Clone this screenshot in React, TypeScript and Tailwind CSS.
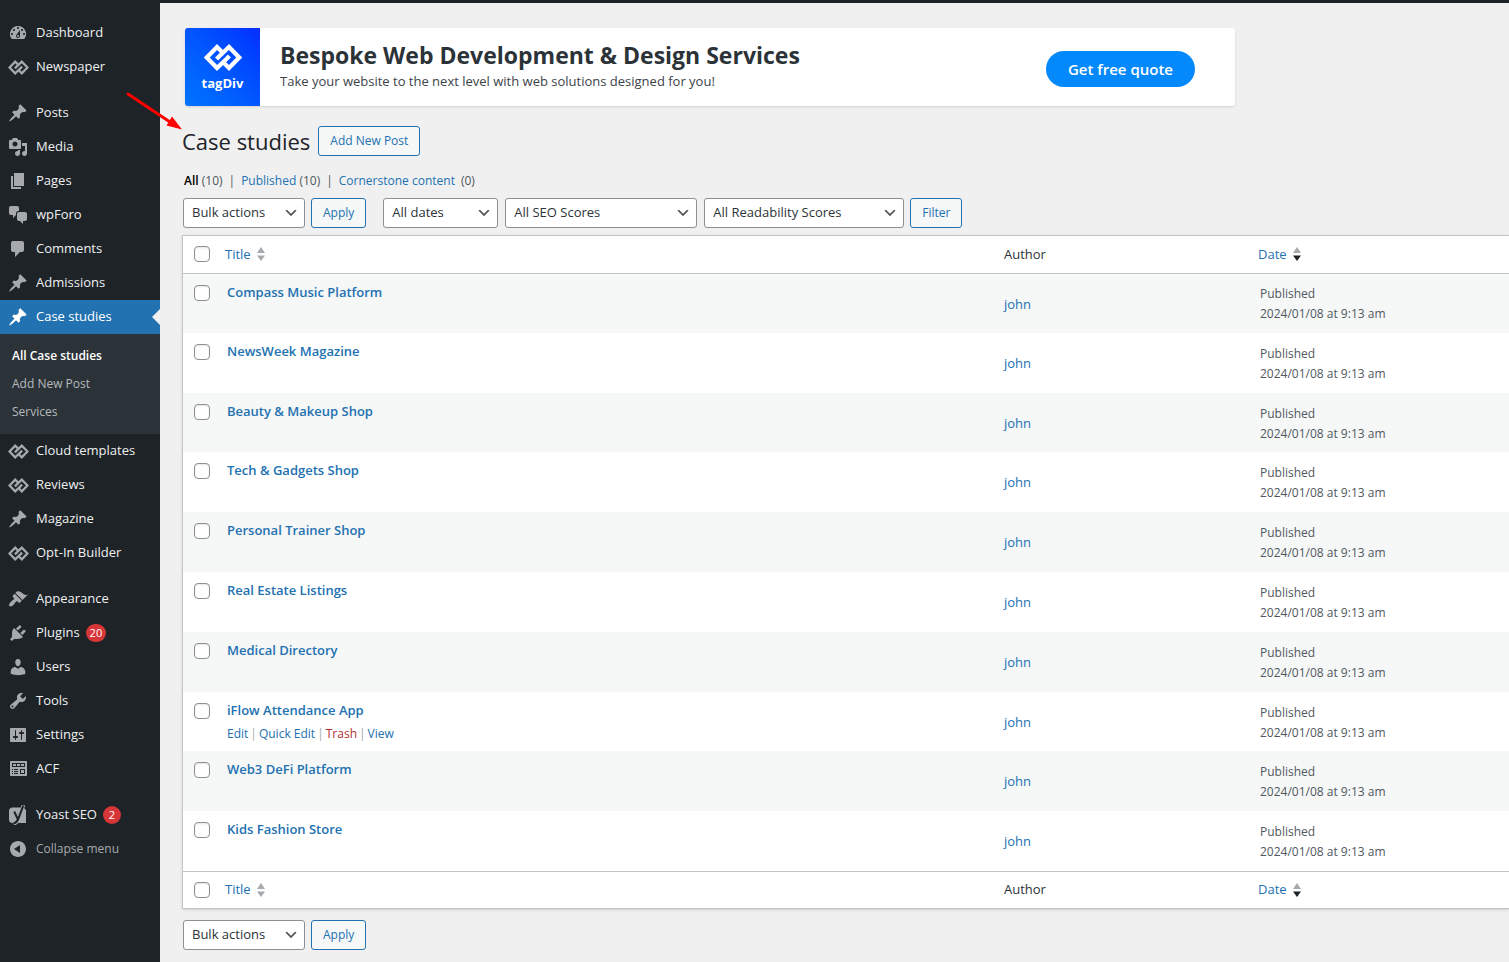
import React, { useState } from "react";

type IconName =
  | "dashboard"
  | "tagdiv"
  | "pin"
  | "media"
  | "pages"
  | "chat"
  | "comment"
  | "brush"
  | "plug"
  | "user"
  | "wrench"
  | "sliders"
  | "acf"
  | "yoast"
  | "collapse";

type MenuItem = {
  label: string;
  icon: IconName;
  count?: number;
  current?: boolean;
};

const ICON_PATHS: Partial<Record<IconName, string>> = {
  dashboard:
    "M3.76 16h12.48A7.998 7.998 0 0 0 10 3a7.998 7.998 0 0 0-6.24 13zM10 4c.55 0 1 .45 1 1s-.45 1-1 1-1-.45-1-1 .45-1 1-1zM6 6c.55 0 1 .45 1 1s-.45 1-1 1-1-.45-1-1 .45-1 1-1zm8 0c.55 0 1 .45 1 1s-.45 1-1 1-1-.45-1-1 .45-1 1-1zm-5.37 5.55L12 7v6c0 1.1-.9 2-2 2s-2-.9-2-2c0-.57.24-1.08.63-1.45zM4 10c.55 0 1 .45 1 1s-.45 1-1 1-1-.45-1-1 .45-1 1-1zm12 0c.55 0 1 .45 1 1s-.45 1-1 1-1-.45-1-1 .45-1 1-1zm-5 3c0-.55-.45-1-1-1s-1 .45-1 1 .45 1 1 1 1-.45 1-1z",
  pin: "M10.44 3.02l1.82-1.82 6.36 6.35-1.83 1.82c-1.05-.68-2.48-.57-3.41.36l-.75.75c-.92.93-1.04 2.35-.35 3.41l-1.83 1.82-2.41-2.41-2.8 2.79c-.42.42-3.38 2.71-3.8 2.29s1.86-3.39 2.28-3.81l2.79-2.79L4.1 9.36l1.83-1.82c1.05.69 2.48.57 3.4-.36l.75-.75c.93-.92 1.05-2.35.36-3.41z",
  media:
    "M13 11V4c0-.55-.45-1-1-1h-1.67L9 1H5L3.67 3H2c-.55 0-1 .45-1 1v7c0 .55.45 1 1 1h10c.55 0 1-.45 1-1zM7 4.5c1.38 0 2.5 1.12 2.5 2.5S8.38 9.5 7 9.5 4.5 8.38 4.5 7 5.62 4.5 7 4.5zM14 6h5v10.5c0 1.38-1.12 2.5-2.5 2.5S14 17.88 14 16.5s1.12-2.5 2.5-2.5c.17 0 .34.02.5.05V9h-3V6zm-4 8.05V13h2v3.5c0 1.38-1.12 2.5-2.5 2.5S7 17.88 7 16.5 8.12 14 9.5 14c.17 0 .34.02.5.05z",
  pages: "M6 15V2h10v13H6zm-1 1h8v2H3V5h2v11z",
  chat: "M11 6h-.82C9.07 6 8 7.2 8 8.16V10l-3 3v-3H3c-1.1 0-2-.9-2-2V3c0-1.1.9-2 2-2h6c1.1 0 2 .9 2 2v3zm0 1h6c1.1 0 2 .9 2 2v5c0 1.1-.9 2-2 2h-2v3l-3-3h-1c-1.1 0-2-.9-2-2V9c0-1.1.9-2 2-2z",
  comment:
    "M5 2h9c1.1 0 2 .9 2 2v7c0 1.1-.9 2-2 2h-2l-5 5v-5H5c-1.1 0-2-.9-2-2V4c0-1.1.9-2 2-2z",
  brush:
    "M14.48 11.06L7.41 3.99l1.5-1.5c.5-.56 2.3-.47 3.51.32 1.21.8 1.43 1.28 2.91 2.1 1.18.64 2.45 1.26 4.45.85zm-.71.71L6.7 4.7 4.93 6.47c-.39.39-.39 1.02 0 1.41l1.06 1.06c.39.39.39 1.03 0 1.42-.6.6-1.43 1.11-2.21 1.69-.35.26-.7.53-1.01.84C1.43 14.23.4 16.08 1.4 17.07c.99 1 2.84-.03 4.18-1.36.31-.31.58-.66.85-1.02.57-.78 1.08-1.61 1.69-2.21.39-.39 1.02-.39 1.41 0l1.06 1.06c.39.39 1.02.39 1.41 0z",
  plug: "M13.11 4.36L9.87 7.6 8 5.73l3.24-3.24c.35-.34 1.05-.2 1.56.32.52.51.66 1.21.31 1.55zm-8 1.77l.91-1.12 9.01 9.01-1.19.84c-.71.71-2.63 1.16-3.82 1.16H6.14L4.9 17.26c-.59.59-1.54.59-2.12 0-.59-.58-.59-1.53 0-2.12l1.24-1.24v-3.88c0-1.13.4-3.19 1.09-3.89zm7.26 3.97l3.24-3.24c.34-.35 1.04-.21 1.55.31.52.51.66 1.21.31 1.55l-3.24 3.25z",
  user: "M10 9.25c-2.27 0-2.73-3.44-2.73-3.44C7 4.02 7.82 2 9.97 2c2.16 0 2.98 2.02 2.71 3.81 0 0-.41 3.44-2.68 3.44zm0 2.57L12.72 10c2.39 0 4.52 2.33 4.52 4.53v2.49s-3.65 1.13-7.24 1.13c-3.65 0-7.24-1.13-7.24-1.13v-2.49c0-2.25 1.94-4.48 4.47-4.48z",
  wrench:
    "M16.68 9.77c-1.34 1.34-3.3 1.67-4.95.99l-5.41 6.52c-.99.99-2.59.99-3.58 0s-.99-2.59 0-3.57l6.52-5.42c-.68-1.65-.35-3.61.99-4.95 1.28-1.28 3.12-1.62 4.72-1.06l-2.89 2.89 2.82 2.82 2.86-2.87c.53 1.58.18 3.39-1.08 4.65zM3.81 16.21c.4.39 1.04.39 1.43 0 .4-.4.4-1.04 0-1.43-.39-.4-1.03-.4-1.43 0-.39.39-.39 1.03 0 1.43z",
  sliders:
    "M18 16V4c0-.55-.45-1-1-1H3c-.55 0-1 .45-1 1v12c0 .55.45 1 1 1h14c.55 0 1-.45 1-1zM8 11h1c.55 0 1 .45 1 1s-.45 1-1 1H8v1.5c0 .28-.22.5-.5.5s-.5-.22-.5-.5V13H6c-.55 0-1-.45-1-1s.45-1 1-1h1V5.5c0-.28.22-.5.5-.5s.5.22.5.5V11zm5-2h-1c-.55 0-1-.45-1-1s.45-1 1-1h1V5.5c0-.28.22-.5.5-.5s.5.22.5.5V7h1c.55 0 1 .45 1 1s-.45 1-1 1h-1v5.5c0 .28-.22.5-.5.5s-.5-.22-.5-.5V9z",
  acf: "M19 16V3c0-.55-.45-1-1-1H3c-.55 0-1 .45-1 1v13c0 .55.45 1 1 1h15c.55 0 1-.45 1-1zM4 4h13v4H4V4zm1 1v2h3V5H5zm4 0v2h3V5H9zm4 0v2h3V5h-3zM4 10h1v1H4v-1zm2 0h4v1H6v-1zm6 0h5v5h-5v-5zm-8 2h1v1H4v-1zm2 0h4v1H6v-1zm7-1v3h3v-3h-3zM4 14h1v1H4v-1zm2 0h4v1H6v-1z",
  collapse:
    "M10 2c4.42 0 8 3.58 8 8s-3.58 8-8 8-8-3.58-8-8 3.58-8 8-8zM12 14V6l-6 4z",
};

const MENU_TOP: MenuItem[] = [
  { label: "Dashboard", icon: "dashboard" },
  { label: "Newspaper", icon: "tagdiv" },
];

const MENU_CONTENT: MenuItem[] = [
  { label: "Posts", icon: "pin" },
  { label: "Media", icon: "media" },
  { label: "Pages", icon: "pages" },
  { label: "wpForo", icon: "chat" },
  { label: "Comments", icon: "comment" },
  { label: "Admissions", icon: "pin" },
  { label: "Case studies", icon: "pin", current: true },
];

const MENU_THEME: MenuItem[] = [
  { label: "Cloud templates", icon: "tagdiv" },
  { label: "Reviews", icon: "tagdiv" },
  { label: "Magazine", icon: "pin" },
  { label: "Opt-In Builder", icon: "tagdiv" },
];

const MENU_ADMIN: MenuItem[] = [
  { label: "Appearance", icon: "brush" },
  { label: "Plugins", icon: "plug", count: 20 },
  { label: "Users", icon: "user" },
  { label: "Tools", icon: "wrench" },
  { label: "Settings", icon: "sliders" },
  { label: "ACF", icon: "acf" },
];

const POSTS = [
  "Compass Music Platform",
  "NewsWeek Magazine",
  "Beauty & Makeup Shop",
  "Tech & Gadgets Shop",
  "Personal Trainer Shop",
  "Real Estate Listings",
  "Medical Directory",
  "iFlow Attendance App",
  "Web3 DeFi Platform",
  "Kids Fashion Store",
];

const TagDivMark = ({ className }: { className: string }) => (
  <svg
    viewBox="0 0 38 27"
    className={className}
    fill="none"
    stroke="currentColor"
    strokeWidth="4.2"
    aria-hidden="true"
  >
    <path d="M19.500 9.500L13 3 2.800 13.500 13 24l11-10.500-1.600-1.600" />
    <path d="M18.500 17.500L25 24l10.200-10.500L25 3 14 13.500l1.600 1.600" />
  </svg>
);

const MenuIcon = ({ name }: { name: IconName }) => {
  if (name === "tagdiv") return <TagDivMark className="h-[15px] w-[21px]" />;
  if (name === "yoast")
    return (
      <svg viewBox="0 0 20 20" className="h-5 w-5" aria-hidden="true">
        <path
          d="M4.500 2.500h11L18 5v13H4.500C2.500 18 1 16.700 1 14.700V6c0-2 1.500-3.500 3.500-3.500z"
          fill="currentColor"
        />
        <path
          d="M15.500 0L10.700 13.500c-1 2.900-2.300 4.600-5.200 5.500"
          fill="none"
          stroke="currentColor"
          strokeWidth="3.600"
        />
        <path
          d="M15.300.5L10.500 13.300c-1 2.900-2.300 4.400-4.900 5.200M6.200 6.500l3.500 7.500"
          fill="none"
          stroke="#1d2327"
          strokeWidth="2"
        />
      </svg>
    );
  return (
    <svg
      viewBox="0 0 20 20"
      className="h-5 w-5"
      fill="currentColor"
      fillRule="evenodd"
      aria-hidden="true"
    >
      <path d={ICON_PATHS[name]} />
    </svg>
  );
};

const MenuGroup = ({ items }: { items: MenuItem[] }) => (
  <ul>
    {items.map((item) => (
      <li key={item.label}>
        <a
          href="#"
          className={`relative flex h-[34px] items-center text-[13px] ${
            item.current ? "bg-[#2271b1] text-white" : "text-[#f0f0f1]"
          }`}
        >
          <span
            className={`flex w-9 justify-center ${
              item.current ? "text-white" : "text-[#a7aaad]"
            }`}
          >
            <MenuIcon name={item.icon} />
          </span>
          {item.label}
          {item.count && (
            <span className="ml-1.5 flex h-[18px] min-w-[18px] items-center justify-center rounded-full bg-[#d63638] px-1 text-[11px] text-white">
              {item.count}
            </span>
          )}
          {item.current && (
            <span className="absolute right-0 border-y-8 border-r-8 border-y-transparent border-r-[#f0f0f0]" />
          )}
        </a>
      </li>
    ))}
  </ul>
);

const Sidebar = () => (
  <nav
    aria-label="Main menu"
    className="flex w-40 shrink-0 flex-col bg-[#1d2327] pt-[13px]"
  >
    <MenuGroup items={MENU_TOP} />
    <div className="h-3" />
    <MenuGroup items={MENU_CONTENT} />
    <ul className="bg-[#2c3338] px-3 py-2 text-xs leading-7 text-[#b4b9be]">
      <li>
        <a href="#" className="font-semibold text-white">
          All Case studies
        </a>
      </li>
      <li>
        <a href="#">Add New Post</a>
      </li>
      <li>
        <a href="#">Services</a>
      </li>
    </ul>
    <MenuGroup items={MENU_THEME} />
    <div className="h-3" />
    <MenuGroup items={MENU_ADMIN} />
    <div className="h-3" />
    <MenuGroup items={[{ label: "Yoast SEO", icon: "yoast", count: 2 }]} />
    <button
      type="button"
      className="flex h-[34px] items-center text-xs text-[#a7aaad]"
    >
      <span className="flex w-9 justify-center">
        <MenuIcon name="collapse" />
      </span>
      Collapse menu
    </button>
  </nav>
);

const Banner = () => (
  <section className="mr-5 ml-[3px] flex h-[78px] max-w-[1050px] items-center overflow-hidden rounded-[3px] bg-white shadow">
    <div className="flex h-full w-[75px] shrink-0 flex-col items-center justify-center bg-linear-to-tr from-[#0074ff] to-[#0a2cff] text-white">
      <TagDivMark className="h-[27px] w-[38px]" />
      <span className="mt-1 text-[13px] leading-4 font-bold">tagDiv</span>
    </div>
    <div className="ml-5 flex-1 pb-1">
      <h2 className="text-[23px] leading-8 font-bold text-[#2c3338]">
        Bespoke Web Development &amp; Design Services
      </h2>
      <p className="text-[13px] leading-5 text-[#3c434a]">
        Take your website to the next level with web solutions designed for you!
      </p>
    </div>
    <a
      href="#"
      className="mt-1 mr-10 flex h-9 w-[149px] items-center justify-center rounded-full bg-[#0489fc] text-[15px] font-semibold text-white"
    >
      Get free quote
    </a>
  </section>
);

const FilterSelect = ({
  label,
  value,
  width,
}: {
  label: string;
  value: string;
  width: string;
}) => (
  <div className={`relative ${width}`}>
    <select
      aria-label={label}
      className="h-[30px] w-full appearance-none rounded-[3px] border border-[#8c8f94] bg-white pr-6 pl-2 text-[13px] text-[#2c3338]"
    >
      <option>{value}</option>
    </select>
    <svg
      viewBox="0 0 20 20"
      className="pointer-events-none absolute top-[7px] right-1.5 h-4 w-4"
      aria-hidden="true"
    >
      <path d="M5 6l5 5 5-5 2 1-7 7-7-7 2-1z" fill="#555" />
    </svg>
  </div>
);

const OutlineButton = ({ children }: { children: React.ReactNode }) => (
  <button
    type="button"
    className="h-[30px] rounded-[3px] border border-[#2271b1] bg-[#f6f7f7] px-[11px] text-xs text-[#2271b1]"
  >
    {children}
  </button>
);

const SortArrows = ({ active = false }: { active?: boolean }) => (
  <svg viewBox="0 0 8 14" className="h-3.5 w-2" aria-hidden="true">
    <path d="M4 0l4 6H0z" fill="#a7aaad" />
    <path d="M4 14L0 8.500h8z" fill={active ? "#1d2327" : "#a7aaad"} />
  </svg>
);

const Checkbox = ({
  label,
  checked,
  onChange,
}: {
  label: string;
  checked: boolean;
  onChange: () => void;
}) => (
  <input
    type="checkbox"
    aria-label={label}
    checked={checked}
    onChange={onChange}
    className="block h-4 w-4 appearance-none rounded-[4px] border border-[#8c8f94] bg-white shadow-[inset_0_1px_2px_rgba(0,0,0,0.1)] checked:bg-[#2271b1]"
  />
);

const HeadingRow = ({
  checked,
  onToggle,
}: {
  checked: boolean;
  onToggle: () => void;
}) => (
  <tr className="h-[37px] text-left text-[13px]">
    <th className="w-[42px] pl-[11px]">
      <Checkbox label="Select all" checked={checked} onChange={onToggle} />
    </th>
    <th className="font-normal">
      <a href="#" className="flex items-center gap-1.5 text-[#2271b1]">
        Title <SortArrows />
      </a>
    </th>
    <th className="w-[254px] pl-2 font-normal text-[#2c3338]">Author</th>
    <th className="w-[259px] pl-2 font-normal">
      <a href="#" className="flex items-center gap-1.5 text-[#2271b1]">
        Date <SortArrows active />
      </a>
    </th>
  </tr>
);

const RowActions = () => (
  <div className="mt-1 flex gap-0.5 text-xs leading-5 text-[#a7aaad]">
    <a href="#" className="text-[#2271b1]">
      Edit
    </a>
    |
    <a href="#" className="text-[#2271b1]">
      Quick Edit
    </a>
    |
    <a href="#" className="text-[#b32d2e]">
      Trash
    </a>
    |
    <a href="#" className="text-[#2271b1]">
      View
    </a>
  </div>
);

const App: React.FC = () => {
  const [selected, setSelected] = useState<string[]>([]);
  const allSelected = selected.length === POSTS.length;

  const toggleAll = () => setSelected(allSelected ? [] : POSTS);
  const toggle = (title: string) =>
    setSelected((prev) =>
      prev.includes(title) ? prev.filter((t) => t !== title) : [...prev, title],
    );

  return (
    <div className="relative flex min-h-screen flex-col border-t-[3px] border-[#1d2327] bg-[#f0f0f0] font-['Open_Sans','Noto_Sans',sans-serif] text-[#2c3338]">
      <div className="flex flex-1">
        <Sidebar />
        <main className="min-w-0 flex-1 pt-[25px] pl-[22px]">
          <Banner />

          <div className="mt-5 flex items-center gap-2">
            <h1 className="text-[22px] leading-7 text-[#1d2327]">
              Case studies
            </h1>
            <OutlineButton>Add New Post</OutlineButton>
          </div>

          <ul className="mt-[15px] ml-0.5 flex gap-1.5 text-xs leading-5 text-[#50575e]">
            <li>
              <a href="#">
                <span className="font-semibold text-black">All</span> (10)
              </a>
            </li>
            <li>|</li>
            <li>
              <a href="#" className="text-[#2271b1]">
                Published <span className="text-[#50575e]">(10)</span>
              </a>
            </li>
            <li>|</li>
            <li>
              <a href="#" className="flex gap-1.5 text-[#2271b1]">
                Cornerstone content
                <span className="text-[#50575e]">(0)</span>
              </a>
            </li>
          </ul>

          <div className="mt-[7px] ml-px flex flex-wrap items-center gap-1.5">
            <FilterSelect
              label="Bulk actions"
              value="Bulk actions"
              width="w-[122px]"
            />
            <OutlineButton>Apply</OutlineButton>
            <div className="ml-[11px] flex items-center gap-[7px]">
              <FilterSelect
                label="Filter by date"
                value="All dates"
                width="w-[115px]"
              />
              <FilterSelect
                label="Filter by SEO score"
                value="All SEO Scores"
                width="w-48"
              />
              <FilterSelect
                label="Filter by readability score"
                value="All Readability Scores"
                width="w-[200px]"
              />
            </div>
            <OutlineButton>Filter</OutlineButton>
          </div>

          <div className="mt-[7px] border border-r-0 border-[#c3c4c7] bg-white shadow-sm">
            <table className="w-full table-fixed border-collapse">
              <thead className="border-b border-[#c3c4c7]">
                <HeadingRow checked={allSelected} onToggle={toggleAll} />
              </thead>
              <tbody>
                {POSTS.map((title) => (
                  <tr
                    key={title}
                    className="h-[60px] odd:bg-[#f6f7f7] nth-[5n+3]:h-[59px]"
                  >
                    <td className="pt-[11px] pl-[11px] align-top">
                      <Checkbox
                        label={`Select ${title}`}
                        checked={selected.includes(title)}
                        onChange={() => toggle(title)}
                      />
                    </td>
                    <td className="pt-2 pl-0.5 align-top">
                      <a
                        href="#"
                        className="block text-[13px] leading-5 font-semibold text-[#2271b1]"
                      >
                        {title}
                      </a>
                      {title === "iFlow Attendance App" && <RowActions />}
                    </td>
                    <td className="pt-0.5 pl-2 text-[13px]">
                      <a href="#" className="text-[#2271b1]">
                        john
                      </a>
                    </td>
                    <td className="pt-0.5 pl-2.5 text-xs leading-5 text-[#50575e]">
                      Published
                      <br />
                      2024/01/08 at 9:13 am
                    </td>
                  </tr>
                ))}
              </tbody>
              <tfoot className="border-t border-[#c3c4c7]">
                <HeadingRow checked={allSelected} onToggle={toggleAll} />
              </tfoot>
            </table>
          </div>

          <div className="mt-[11px] ml-px flex items-center gap-1.5 pb-3">
            <FilterSelect
              label="Bulk actions for selected posts"
              value="Bulk actions"
              width="w-[122px]"
            />
            <OutlineButton>Apply</OutlineButton>
          </div>
        </main>
      </div>

      {/* pointer to the page heading */}
      <svg
        viewBox="0 0 56 38"
        className="pointer-events-none absolute top-[89px] left-[126px] h-[38px] w-14"
        aria-hidden="true"
      >
        <path
          d="M2 2l42 28"
          stroke="#f00"
          strokeWidth="3"
          strokeLinecap="round"
        />
        <path d="M56 37.500l-15.500-4 5.500-9z" fill="#f00" />
      </svg>
    </div>
  );
};

export default App;
